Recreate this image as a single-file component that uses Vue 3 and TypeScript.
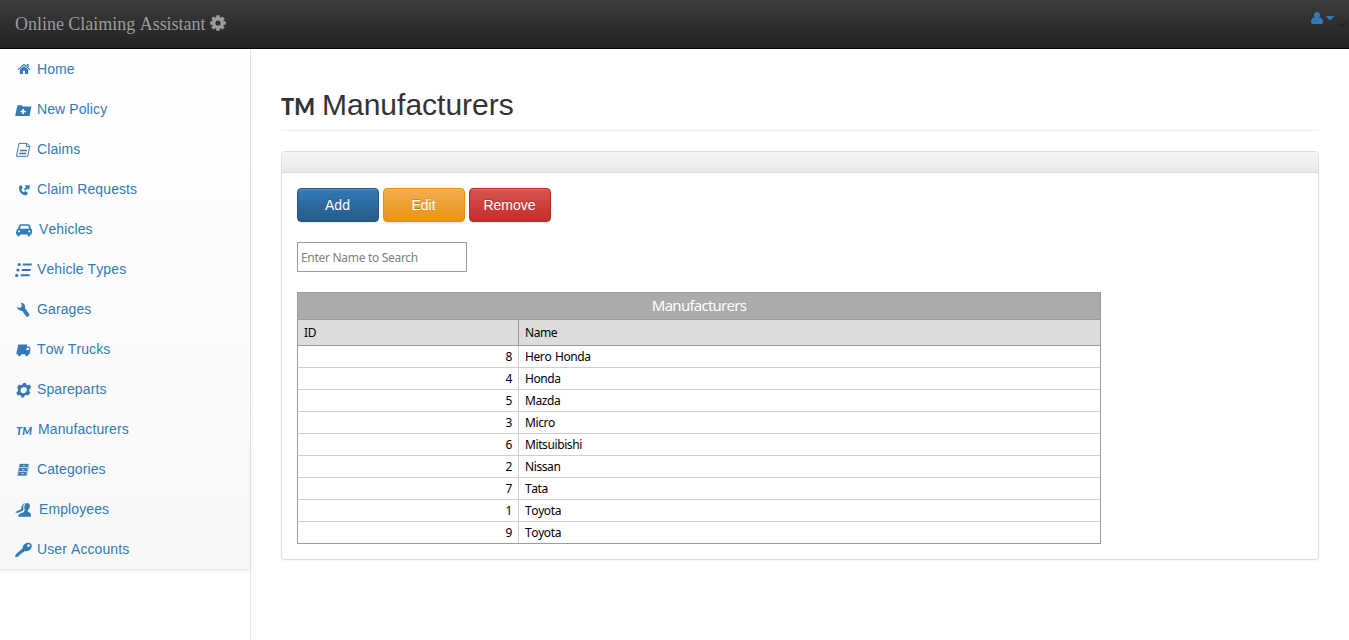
<script setup lang="ts">
import { ref, computed } from 'vue'

interface MenuItem {
  label: string
  icon: string
  wide?: number
}

interface Manufacturer {
  id: number
  name: string
}

const menu: MenuItem[] = [
  { label: 'Home', icon: 'home' },
  { label: 'New Policy', icon: 'folder' },
  { label: 'Claims', icon: 'file' },
  { label: 'Claim Requests', icon: 'phone' },
  { label: 'Vehicles', icon: 'car', wide: 2 },
  { label: 'Vehicle Types', icon: 'list' },
  { label: 'Garages', icon: 'wrench' },
  { label: 'Tow Trucks', icon: 'truck' },
  { label: 'Spareparts', icon: 'gear' },
  { label: 'Manufacturers', icon: 'tm', wide: 1 },
  { label: 'Categories', icon: 'drawer' },
  { label: 'Employees', icon: 'people', wide: 2 },
  { label: 'User Accounts', icon: 'key' },
]

const rows: Manufacturer[] = [
  { id: 8, name: 'Hero Honda' },
  { id: 4, name: 'Honda' },
  { id: 5, name: 'Mazda' },
  { id: 3, name: 'Micro' },
  { id: 6, name: 'Mitsuibishi' },
  { id: 2, name: 'Nissan' },
  { id: 7, name: 'Tata' },
  { id: 1, name: 'Toyota' },
  { id: 9, name: 'Toyota' },
]

const search = ref('')
const visibleRows = computed(() =>
  rows.filter((r) => r.name.toLowerCase().includes(search.value.toLowerCase())),
)
</script>

<template>
  <div class="page">
    <header class="navbar">
      <a class="brand">
        <span class="brand-text">Online Claiming Assistant</span>
        <svg class="brand-gear" width="16" height="16" viewBox="0 0 16 16">
          <g fill="#9d9d9d">
            <rect v-for="a in [0, 45, 90, 135]" :key="a" x="6.2" y="0.2" width="3.6" height="15.6" rx="0.6" :transform="`rotate(${a} 8 8)`" />
          </g>
          <circle cx="8" cy="8" r="4.3" fill="none" stroke="#9d9d9d" stroke-width="3.4" />
          <circle cx="8" cy="8" r="2.6" fill="#303030" />
        </svg>
      </a>
      <div class="account">
        <svg width="38" height="18" viewBox="0 0 38 18">
          <path fill="#337ab7" d="M6 2a3 3.2 0 0 1 2.1 5.6C10.600 7.700 12 9.200 12 11.800C12 13.300 11.300 14 10 14H2C.7 14 0 13.300 0 11.800C0 9.200 1.400 7.700 3.900 7.600A3 3.200 0 0 1 6 2z" />
          <path fill="#337ab7" d="M14.700 6h8.800l-4.400 4.600z" />
          <path fill="none" stroke="#1d1d1d" stroke-width="1.300" d="M27.500 13.300l3.500 3.400l3.500-3.400" />
        </svg>
      </div>
    </header>

    <div class="body">
      <aside class="sidebar">
        <nav class="menu">
          <a v-for="item in menu" :key="item.label" class="menu-item">
            <svg class="icon" width="20" height="18" viewBox="0 0 20 18" fill="currentColor">
              <g v-if="item.icon === 'home'">
                <path d="M4.800 8.600L9 5.200l4.200 3.400V13H10V9.800H8V13H4.800z" />
                <path d="M11.700 3.100h1.900v3.200l-1.900-1.500z" />
                <path fill="none" stroke="currentColor" stroke-width="1.200" d="M3 8.600L9 3.600l6 5" />
              </g>
              <g v-else-if="item.icon === 'folder'">
                <path d="M2.600 4.200h4.300l.6 1.300h8.900L14.600 15H.2L1.600 8z" />
                <path stroke="#fff" stroke-width="1.700" d="M8.200 7.900v5.200M5.600 10.500h5.200" />
              </g>
              <g v-else-if="item.icon === 'file'" fill="none" stroke="currentColor" stroke-width="1">
                <path d="M4 2.400h8l2.800 2.800l-2.100 10.100H1.500z" />
                <path d="M11.800 2.500l-.5 3h3.300" />
                <path stroke-width="1.300" d="M5 9.500h7M4.300 12.500h7" />
              </g>
              <g v-else-if="item.icon === 'phone'">
                <path d="M4.200 4.900L6.800 4.200L7.600 7.300L6.300 8.600Q6.900 10.600 8.700 11.200L10.200 10.100L12.800 11.800L12 14Q8.900 14.900 6.300 12.600T4.200 4.900z" />
                <path d="M9.500 4.200H15l-1 4.700l-1.400-1.300l-2.200 1.800l-1.500-1.500l2.200-1.900z" />
              </g>
              <g v-else-if="item.icon === 'car'">
                <path fill-rule="evenodd" d="M5.800 3.200h7.400q1.500 0 2 1.600l.8 2.900q1.300.4 1.100 2.200l-.5 3.500h-1.300l-.2 1.100q-.3 1.100-1.400 1.100t-1-1.100l.1-1.100H5.100l-.3 1.100q-.4 1.100-1.400 1.100t-1-1.100l.2-1.100H.8l.6-3.700q.3-1.500 1.500-2L4 4.800q.6-1.600 1.800-1.600zM6 4.800L4.800 7.700h9.400l-.8-2.900zM4 9.200a1.100 1.100 0 1 0 .1 0zm10.300 0a1.100 1.100 0 1 0 .1 0z" />
              </g>
              <g v-else-if="item.icon === 'list'">
                <g stroke="currentColor" stroke-width="2"><path d="M7.700 3.500h9M6.700 9h9M5.700 14.300h9" /></g>
                <circle cx="4.200" cy="3.500" r="1.600" /><circle cx="3" cy="9" r="1.600" /><circle cx="1.700" cy="14.400" r="1.600" />
              </g>
              <g v-else-if="item.icon === 'wrench'">
                <path d="M5.600 1.800q2.900-.2 4 1.900q.9 1.600.3 3.400l4.300 5.900q.6 1.300-.6 2.300t-2.500 0L7.300 9.900Q3.200 10.200 1.700 5.600l2.700 1.400l2.200-1.200l.1-2.300z" />
              </g>
              <g v-else-if="item.icon === 'truck'">
                <path fill-rule="evenodd" d="M3.300 3.500h9L12 5.400h1.700q.8 0 1.100.8l.6 2.400l-.8 4.700h-1q-.5 1.900-2 1.900t-1.600-1.900H6.400q-.6 1.900-2.100 1.900t-1.500-1.900H1.200zM11.700 6.700l-.4 2.300h2.900l-.6-2.300z" />
              </g>
              <g v-else-if="item.icon === 'gear'">
                <g transform="translate(1.300 .3) skewX(-8)">
                  <path fill-rule="evenodd" d="M7.300 1.600h2.600l.8 1.900l1.200.5l2-.7l1.700 2.700l-1.300 1.800v1.800l1.300 1.800l-1.700 2.700l-2.100-.5l-1.200.6l-.8 2H7.300l-.8-2l-1.200-.6l-2.100.5l-1.600-2.700l1.300-1.800V7.800L1.600 6l1.600-2.700l2 .7l1.200-.5zM8.600 5.600a3.200 3.200 0 1 0 .1 0z" />
                </g>
              </g>
              <text v-else-if="item.icon === 'tm'" class="tm-small" x="1" y="13.800" textLength="16" lengthAdjust="spacingAndGlyphs">TM</text>
              <g v-else-if="item.icon === 'drawer'">
                <path d="M5.400 2.800h8q1 0 .8 1L12.300 14q-.2 1-1.200 1H3q-1 0-.8-1L4.200 3.800q.2-1 1.200-1z" opacity=".55" />
                <path d="M5.300 2.900h7.700l-.6 3.300h-7.700zM4.600 7h7.600l-.5 3.200h-7.700zM3.800 11h7.700l-.5 3.300h-7.700z" />
                <path stroke="#fbfbfb" stroke-width=".6" d="M5 6.600h7.400M4.200 10.600h7.400" />
                <path stroke="#fbfbfb" stroke-width=".8" d="M7.700 4.700h2.400M7 8.700h2.400M6.300 12.700h2.400" />
              </g>
              <g v-else-if="item.icon === 'people'">
                <path d="M7.300 4.200q.8-2.200 2.800-2.300q-1.800 2.500-1 5.800q-.8.700-1.200 2q-3 1-3.600 2H.4q.4-1.900 4.500-2.800q1.600-.5 1.500-1.200q-.7-1.500.9-3.500z" />
                <path d="M12.300 1.900q3.100.3 2.500 3.500q-.2 2.400-1.800 3.600q-.6 1.700.9 2.300q2.800.8 1.900 4.400H3q.3-2.800 3-3.700q3-.5 3.500-2.200q-.8-1.400-.5-3.800q.5-3.900 3.300-4.100z" />
                <path fill="none" stroke="#fff" stroke-width=".9" d="M9.100 3.600q-.9 2.700.1 5.200q-.2 2-3.600 2.800l-2.700 1" />
              </g>
              <g v-else-if="item.icon === 'key'">
                <path fill-rule="evenodd" d="M13 1.800q4.200.2 3.700 3.800q-.7 3.800-4.500 4.600q-1.600.3-2.600-.2l-1.300 1.600l-1.600.2l-.5 1.500l-1.700.2l-.6 1.500l-2 1.100H.2l.4-2.600L7.700 7.200q-.3-2 1.400-3.700t3.900-1.700zM13.500 3.300a1.500 1.300 0 1 0 .1 0z" />
              </g>
            </svg>
            <span class="menu-label" :class="{ shift1: item.wide === 1, shift2: item.wide === 2 }">{{ item.label }}</span>
          </a>
        </nav>
      </aside>

      <main class="content">
        <h1 class="title">
          <svg class="tm-big" width="35" height="30" viewBox="0 0 35 30"><text x="0" y="23" textLength="34" lengthAdjust="spacingAndGlyphs">TM</text></svg>
          <span>Manufacturers</span>
        </h1>

        <section class="panel">
          <div class="panel-head"></div>
          <div class="panel-body">
            <div class="buttons">
              <button class="btn add">Add</button>
              <button class="btn edit">Edit</button>
              <button class="btn remove">Remove</button>
            </div>
            <input v-model="search" class="search" type="text" placeholder="Enter Name to Search" />
            <div class="grid">
              <div class="caption">Manufacturers</div>
              <div class="row head"><div class="cell">ID</div><div class="cell">Name</div></div>
              <div v-for="row in visibleRows" :key="row.id" class="row">
                <div class="cell num">{{ row.id }}</div>
                <div class="cell">{{ row.name }}</div>
              </div>
            </div>
          </div>
        </section>
      </main>
    </div>
  </div>
</template>

<style>
body {
  margin: 0;
  background: #fff;
  overflow: hidden;
}
</style>

<style scoped>
* {
  box-sizing: border-box;
}
.page {
  height: 640px;
  display: flex;
  flex-direction: column;
  font-family: "Liberation Sans", Arial, sans-serif;
  font-size: 14px;
  line-height: 20px;
  color: #333;
  font-kerning: none;
}
.navbar {
  flex: none;
  height: 49px;
  display: flex;
  justify-content: space-between;
  background: linear-gradient(#3c3c3c, #222);
  border-bottom: 1px solid #080808;
  padding: 0 0 0 15px;
}
.brand {
  display: flex;
  align-items: flex-start;
  padding-top: 14px;
  color: #9d9d9d;
  font: 18px/20px "Liberation Serif", "Times New Roman", serif;
  font-kerning: none;
}
.brand-text {
  width: 195px;
  white-space: nowrap;
  letter-spacing: -0.02px;
}
.brand-gear {
  margin-top: 1px;
}
.account {
  padding-top: 10px;
  height: 30px;
}
.account svg {
  display: block;
}
.body {
  flex: 1;
  display: flex;
}
.sidebar {
  width: 251px;
  flex: none;
  border-right: 1px solid #e7e7e7;
}
.menu {
  height: 521px;
  background: linear-gradient(#fff, #f8f8f8);
  border-bottom: 1px solid #e4e4e4;
  box-shadow: 0 1px 5px rgba(0, 0, 0, 0.075);
}
.menu-item {
  display: flex;
  height: 40px;
  padding: 10px 15px;
  color: #337ab7;
}
.menu-label {
  letter-spacing: 0.1px;
}
.icon {
  display: block;
  width: 20px;
  flex: none;
  margin: 2px 2px 0 0;
}
.tm-small {
  font: italic 900 11px Lato, sans-serif;
}
.shift1 {
  padding-left: 1px;
}
.shift2 {
  padding-left: 2px;
}
.content {
  flex: 1;
  padding: 0 30px;
}
.title {
  display: flex;
  align-items: flex-start;
  height: 82px;
  margin: 0 0 20px;
  padding-top: 39px;
  border-bottom: 1px solid #eee;
  font-size: 30px;
  line-height: 33px;
  font-weight: 400;
}
.tm-big {
  margin: 4px 6px 0 0;
  font: 900 22.500px Lato, sans-serif;
  fill: #333;
}
.panel {
  height: 409px;
  border: 1px solid #ddd;
  border-radius: 4px;
  box-shadow: 0 1px 2px rgba(0, 0, 0, 0.05);
}
.panel-head {
  height: 21px;
  background: linear-gradient(#f5f5f5, #e8e8e8);
  border-bottom: 1px solid #ddd;
  border-radius: 3px 3px 0 0;
}
.panel-body {
  padding: 15px;
}
.buttons {
  display: flex;
  gap: 4px;
}
.btn {
  width: 82px;
  height: 34px;
  padding: 0 1px 0 0;
  border: 1px solid;
  border-radius: 4px;
  color: #fff;
  font: 14px/20px "Liberation Sans", Arial, sans-serif;
  text-shadow: 0 -1px 0 rgba(0, 0, 0, 0.2);
  box-shadow: inset 0 1px 0 rgba(255, 255, 255, 0.15), 0 1px 1px rgba(0, 0, 0, 0.075);
}
.add {
  background: linear-gradient(#337ab7, #265a88);
  border-color: #245580;
}
.edit {
  background: linear-gradient(#f0ad4e, #eb9316);
  border-color: #e38d13;
}
.remove {
  background: linear-gradient(#d9534f, #c12e2a);
  border-color: #b92c28;
}
.search {
  display: block;
  width: 170px;
  height: 30px;
  margin: 20px 0;
  padding: 1px 3px;
  border: 1px solid #9b9b9b;
  border-radius: 0;
  background: #fff;
  color: #000;
  font: 12px "Noto Sans", sans-serif;
  letter-spacing: -0.3px;
}
.search::placeholder {
  color: #808080;
}
.grid {
  width: 804px;
  border: 1px solid #9b9b9b;
  color: #000;
  font: 12px/21px "Noto Sans", sans-serif;
  font-kerning: none;
  letter-spacing: -0.4px;
  word-spacing: 1px;
}
.caption {
  height: 27px;
  background: #ababab;
  border-bottom: 1px solid #9b9b9b;
  color: #fff;
  text-align: center;
  font-size: 15px;
  line-height: 25px;
  letter-spacing: -0.75px;
}
.row {
  display: grid;
  grid-template-columns: 221px 1fr;
  height: 22px;
  border-bottom: 1px solid #cfcfcf;
}
.row:last-child {
  height: 21px;
  border-bottom: 0;
}
.cell {
  padding: 0 6px;
}
.cell:first-child {
  border-right: 1px solid #cfcfcf;
}
.num {
  text-align: right;
}
.row.head {
  height: 26px;
  line-height: 25px;
  background: #dcdcdc;
  border-bottom-color: #9b9b9b;
}
.head .cell:first-child {
  border-right-color: #9b9b9b;
}
</style>
